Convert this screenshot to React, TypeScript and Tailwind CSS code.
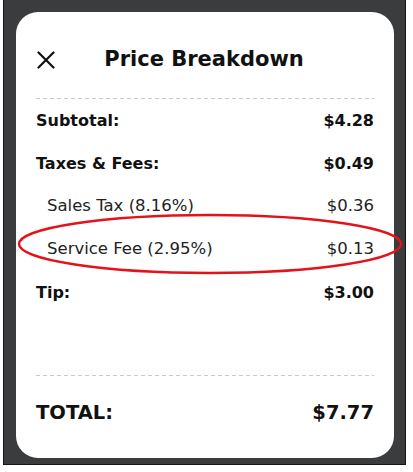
const rows = [
  { label: 'Subtotal:', value: '$4.28', bold: true },
  { label: 'Taxes & Fees:', value: '$0.49', bold: true },
  { label: 'Sales Tax (8.16%)', value: '$0.36', bold: false },
  { label: 'Service Fee (2.95%)', value: '$0.13', bold: false },
  { label: 'Tip:', value: '$3.00', bold: true },
]

function Dashes() {
  return (
    <div className="h-px w-full bg-[repeating-linear-gradient(to_right,#c9c9c9_0_4px,transparent_4px_7px)]" />
  )
}

export default function App() {
  return (
    <div className="w-[413px] h-[472px] bg-white font-['DejaVu_Sans',sans-serif]">
      <div className="relative ml-[3px] w-[403px] h-[465px] bg-[#3b3c3e] border-x border-b border-[#141414] pt-[12px] pl-[12px]">
        <div className="w-[378px] h-[446px] bg-white rounded-[22px] px-[20px] pt-[30px]">
          {/* Header */}
          <div className="grid grid-cols-[1fr_auto_1fr] items-center h-[36px]">
            <svg width="18" height="18" viewBox="0 0 18 18" className="ml-[1px]">
              <path d="M1.5 1.5 L16.5 16.5 M16.5 1.5 L1.5 16.5" stroke="#111" strokeWidth="2.2" strokeLinecap="round" />
            </svg>
            <h1 className="text-[21px] font-bold text-[#111] -ml-[2px]">Price Breakdown</h1>
            <div />
          </div>

          <div className="mt-[20px]">
            <Dashes />
          </div>

          {/* Line items */}
          <div className="flex flex-col">
            {rows.map(r => (
              <div key={r.label} className="flex items-center justify-between h-[43px]">
                <span className={r.bold ? 'text-[16px] font-bold text-[#111]' : 'pl-[11px] text-[16.5px] text-[#222]'}>{r.label}</span>
                <span className={r.bold ? 'text-[16px] font-bold text-[#111]' : 'text-[16.5px] text-[#222]'}>{r.value}</span>
              </div>
            ))}
          </div>

          <div className="mt-[61px]">
            <Dashes />
          </div>

          <div className="flex items-center justify-between h-[74px]">
            <span className="text-[19.5px] font-bold text-[#111]">TOTAL:</span>
            <span className="text-[19.5px] font-bold text-[#111]">$7.77</span>
          </div>
        </div>

        {/* Highlight around service fee */}
        <svg className="absolute left-[-3px] top-0 pointer-events-none" width="413" height="465" viewBox="0 0 413 465">
          <ellipse cx="209" cy="244" rx="191" ry="29" fill="none" stroke="#e3131b" strokeWidth="2.4" />
        </svg>
      </div>
    </div>
  )
}
